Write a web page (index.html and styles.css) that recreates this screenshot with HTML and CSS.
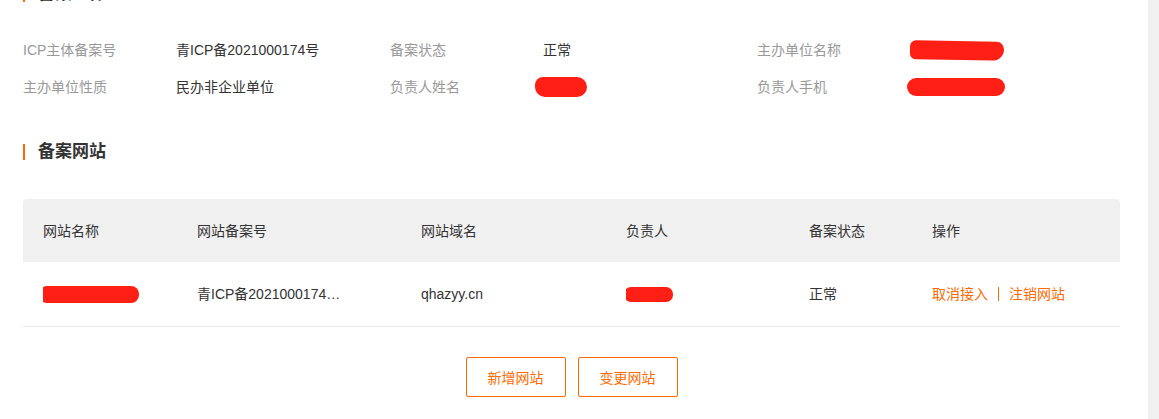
FILE: index.html
```html
<!DOCTYPE html>
<html lang="zh-CN">
<head>
<meta charset="utf-8">
<title>备案信息</title>
<link rel="stylesheet" href="styles.css">
</head>
<body>
<div class="page">
  <div class="content">
    <h2 class="sec-title">备案主体</h2>
    <div class="info">
      <div class="info-item"><span class="label">ICP主体备案号</span><span class="value">青ICP备2021000174号</span></div>
      <div class="info-item"><span class="label">备案状态</span><span class="value">正常</span></div>
      <div class="info-item"><span class="label">主办单位名称</span><span class="value"><span class="redact r1"></span></span></div>
      <div class="info-item"><span class="label">主办单位性质</span><span class="value">民办非企业单位</span></div>
      <div class="info-item"><span class="label">负责人姓名</span><span class="value"><span class="redact r2"></span></span></div>
      <div class="info-item"><span class="label">负责人手机</span><span class="value"><span class="redact r3"></span></span></div>
    </div>

    <h2 class="sec-title sec-two">备案网站</h2>
    <div class="table">
      <div class="trow thead">
        <div class="cell">网站名称</div>
        <div class="cell">网站备案号</div>
        <div class="cell">网站域名</div>
        <div class="cell">负责人</div>
        <div class="cell">备案状态</div>
        <div class="cell">操作</div>
      </div>
      <div class="trow tbody">
        <div class="cell"><span class="redact r4"></span></div>
        <div class="cell"><span class="ellipsis">青ICP备2021000174号-1</span></div>
        <div class="cell">qhazyy.cn</div>
        <div class="cell"><span class="redact r5"></span></div>
        <div class="cell">正常</div>
        <div class="cell ops"><a class="link">取消接入</a><span class="sep"></span><a class="link">注销网站</a></div>
      </div>
    </div>
    <div class="actions">
      <button class="btn">新增网站</button>
      <button class="btn">变更网站</button>
    </div>
  </div>
</div>
<div class="scrollbar"></div>
</body>
</html>
```
FILE: styles.css
```css
html, body {
  margin: 0;
  padding: 0;
  height: 100%;
  overflow: hidden;
  background: #fff;
}
body {
  display: flex;
  font-family: "Liberation Sans", "Noto Sans CJK SC", sans-serif;
  font-size: 14px;
  color: #333;
}
.page {
  flex: 1;
  min-width: 0;
}
.scrollbar {
  width: 11px;
  background: #f1f1f1;
  flex: none;
}
.content {
  margin-top: -15px;
  padding: 0 28px 0 23px;
}
.sec-title {
  margin: 0;
  display: flex;
  align-items: center;
  height: 18px;
  line-height: 18px;
  font-size: 17px;
  font-weight: bold;
  color: #333;
}
.sec-title::before {
  content: "";
  width: 2px;
  height: 16px;
  background: #ff6a00;
  margin-right: 13px;
}
.sec-two {
  margin-top: 46px;
}
.info {
  margin-top: 37px;
  display: grid;
  grid-template-columns: 367px 367px 1fr;
  row-gap: 17px;
}
.info-item {
  display: flex;
  height: 20px;
  line-height: 20px;
}
.label {
  width: 153px;
  color: #999;
  flex: none;
}
.value {
  color: #333;
  display: flex;
  align-items: center;
}
.redact {
  display: inline-block;
  background: #ff1f14;
}
.r1 {
  width: 94px;
  height: 19px;
  border-radius: 6px 8px 12px 6px;
  transform: rotate(1deg);
}
.r2 {
  width: 52px;
  height: 20px;
  border-radius: 8px 10px 10px 10px;
  margin-left: -8px;
}
.r3 {
  width: 98px;
  height: 18px;
  border-radius: 9px;
  margin-left: -3px;
}
.table {
  margin-top: 38px;
}
.trow {
  display: grid;
  grid-template-columns: 154px 224px 205px 183px 123px 1fr;
  padding-left: 20px;
  align-items: center;
}
.thead {
  height: 63px;
  background: #f0f0f0;
  border-radius: 4px 4px 0 0;
}
.tbody {
  height: 64px;
  border-bottom: 1px solid #ececec;
}
.cell {
  line-height: 20px;
  white-space: nowrap;
  overflow: hidden;
  display: flex;
  align-items: center;
}
.ellipsis {
  display: block;
  width: 154px;
  overflow: hidden;
  text-overflow: ellipsis;
  white-space: nowrap;
}
.r4 {
  width: 100px;
  height: 17px;
  border-radius: 8px;
  margin-left: -4px;
}
.r5 {
  width: 49px;
  height: 15px;
  border-radius: 7px;
  margin-left: -2px;
}
.ops {
  display: flex;
  align-items: center;
}
.link {
  color: #ff6a00;
  cursor: pointer;
}
.sep {
  width: 1px;
  height: 14px;
  background: #ff6a00;
  margin: 0 10px;
}
.actions {
  display: flex;
  justify-content: center;
  gap: 12px;
  margin-top: 30px;
}
.btn {
  width: 100px;
  height: 40px;
  border: 1px solid #ff6a00;
  border-radius: 2px;
  background: #fff;
  color: #ff6a00;
  font-family: "Liberation Sans", "Noto Sans CJK SC", sans-serif;
  font-size: 14px;
  padding: 0;
  cursor: pointer;
}
```
